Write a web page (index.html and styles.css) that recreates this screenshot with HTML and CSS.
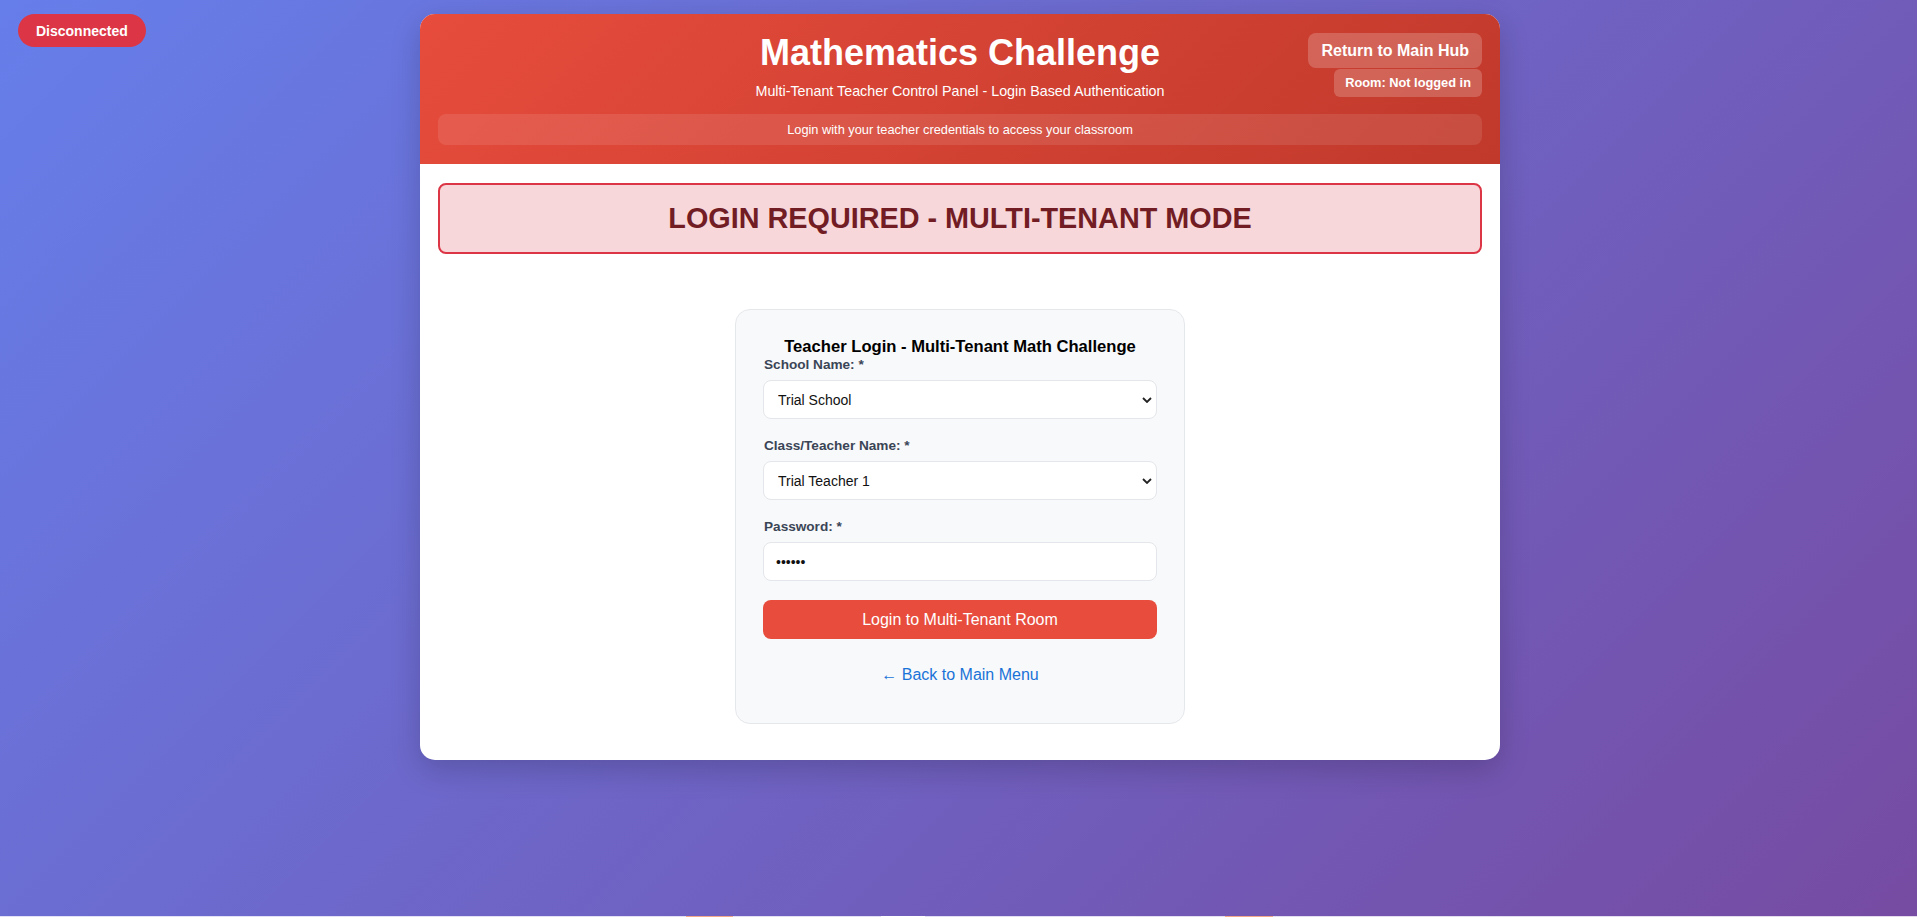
FILE: index.html
```html
<!DOCTYPE html>
<html lang="en">
<head>
<meta charset="utf-8">
<title>Mathematics Challenge - Teacher Control Panel</title>
<link rel="stylesheet" href="styles.css">
</head>
<body>
  <div class="status">Disconnected</div>

  <div class="container">
    <header class="header">
      <h1 class="title">Mathematics Challenge</h1>
      <p class="subtitle">Multi-Tenant Teacher Control Panel - Login Based Authentication</p>
      <div class="info">Login with your teacher credentials to access your classroom</div>
      <div class="header-actions">
        <button class="hub-btn" type="button">Return to Main Hub</button>
        <div class="room">Room: Not logged in</div>
      </div>
    </header>

    <main class="content">
      <div class="alert">LOGIN REQUIRED - MULTI-TENANT MODE</div>

      <form class="login-card">
        <h3 class="card-title">Teacher Login - Multi-Tenant Math Challenge</h3>

        <div class="form-group">
          <label class="label">School Name: *</label>
          <div class="select-wrap">
            <select class="field">
              <option>Trial School</option>
            </select>
            <svg class="chev" width="10" height="6" viewBox="0 0 10 6"><path d="M1 1l4 4 4-4" fill="none" stroke="#222" stroke-width="1.8"/></svg>
          </div>
        </div>

        <div class="form-group">
          <label class="label">Class/Teacher Name: *</label>
          <div class="select-wrap">
            <select class="field">
              <option>Trial Teacher 1</option>
            </select>
            <svg class="chev" width="10" height="6" viewBox="0 0 10 6"><path d="M1 1l4 4 4-4" fill="none" stroke="#222" stroke-width="1.8"/></svg>
          </div>
        </div>

        <div class="form-group">
          <label class="label">Password: *</label>
          <input class="field pw" type="password" value="123456">
        </div>

        <button class="login-btn" type="button">Login to Multi-Tenant Room</button>

        <div class="back"><a class="back-link" href="#">← Back to Main Menu</a></div>
      </form>
    </main>
  </div>

  <div class="below">
    <span class="piece piece-a"></span>
    <span class="piece piece-b"></span>
    <span class="piece piece-c"></span>
  </div>
</body>
</html>
```

FILE: styles.css
```css
* { box-sizing: border-box; }

html, body { height: 100%; }

body {
  margin: 0;
  padding-left: 3px;
  min-height: 100vh;
  font-family: "Liberation Sans", Arial, sans-serif;
  background: linear-gradient(135deg, #667eea 0%, #764ba2 100%);
  color: #333;
}

.status {
  position: fixed;
  top: 14px;
  left: 18px;
  padding: 8px 18px;
  height: 33px;
  line-height: 18px;
  background: #dc3545;
  color: #fff;
  font-weight: bold;
  font-size: 14px;
  border-radius: 20px;
  z-index: 10;
}

.container {
  width: 1080px;
  margin: 14px auto 0;
  background: #fff;
  border-radius: 15px;
  overflow: hidden;
  box-shadow: 0 10px 30px rgba(0, 0, 0, 0.18);
}

.header {
  position: relative;
  background: linear-gradient(135deg, #e74c3c, #c0392b);
  color: #fff;
  padding: 18px 18px 19px;
  text-align: center;
}

.title {
  margin: 0;
  font-size: 36px;
  line-height: 41px;
  font-weight: bold;
}

.subtitle {
  margin: 10px 0 0;
  font-size: 14.3px;
  line-height: 17px;
}

.info {
  margin-top: 14px;
  background: rgba(255, 255, 255, 0.1);
  border-radius: 8px;
  padding: 8px 10px;
  font-size: 12.8px;
  line-height: 15px;
}

.header-actions {
  position: absolute;
  top: 19px;
  right: 18px;
  display: flex;
  flex-direction: column;
  align-items: flex-end;
  gap: 1px;
}

.hub-btn {
  font-family: inherit;
  font-size: 16px;
  font-weight: bold;
  line-height: 19px;
  color: #fff;
  background: rgba(255, 255, 255, 0.2);
  border: none;
  border-radius: 8px;
  padding: 8px 13px;
}

.room {
  font-size: 12.8px;
  font-weight: bold;
  line-height: 18px;
  padding: 5px 11px;
  background: rgba(255, 255, 255, 0.2);
  border-radius: 6px;
}

.content {
  padding: 19px 18px 36px;
}

.alert {
  background: #f8d7da;
  border: 2px solid #dc3545;
  border-radius: 8px;
  color: #721c24;
  font-size: 28.8px;
  font-weight: bold;
  line-height: 33px;
  padding: 17px 10px;
  text-align: center;
}

.login-card {
  width: 450px;
  margin: 55px auto 0;
  background: #f8f9fa;
  border: 1px solid #e5e8eb;
  border-radius: 15px;
  padding: 27px 27px 39px;
}

.card-title {
  margin: 0;
  text-align: center;
  font-size: 16.6px;
  line-height: 20px;
  color: #000;
}

.form-group {
  margin-bottom: 19px;
}

.label {
  display: block;
  font-size: 13.6px;
  line-height: 16px;
  font-weight: bold;
  color: #3a4556;
  margin-bottom: 7px;
  padding-left: 1px;
}

.select-wrap {
  position: relative;
}

.field {
  display: block;
  width: 100%;
  height: 39px;
  border: 1px solid #e3e6ea;
  border-radius: 8px;
  background: #fff;
  font-family: inherit;
  font-size: 14px;
  color: #111;
  padding: 0 14px;
  -webkit-appearance: none;
  appearance: none;
  outline: none;
}

.pw {
  padding: 0 12px;
}

.chev {
  position: absolute;
  right: 5px;
  top: 17px;
  pointer-events: none;
}

.login-btn {
  display: block;
  width: 100%;
  height: 39px;
  border: none;
  border-radius: 8px;
  background: #e74c3c;
  color: #fff;
  font-family: inherit;
  font-size: 16px;
}

.back {
  margin-top: 27px;
  text-align: center;
  font-size: 16px;
  line-height: 18px;
}

.back-link {
  color: #1a73d8;
  text-decoration: none;
}

.below {
  position: relative;
  margin: 156px 0 0 -3px;
  height: 20px;
  background: rgba(255, 255, 255, 0.8);
}

.piece {
  position: absolute;
  top: 0;
  height: 20px;
}

.piece-a { left: 686px; width: 47px; background: #f4a98a; }
.piece-b { left: 881px; width: 44px; background: #ffffff; }
.piece-c { left: 1225px; width: 48px; background: #f4a98a; }
```
